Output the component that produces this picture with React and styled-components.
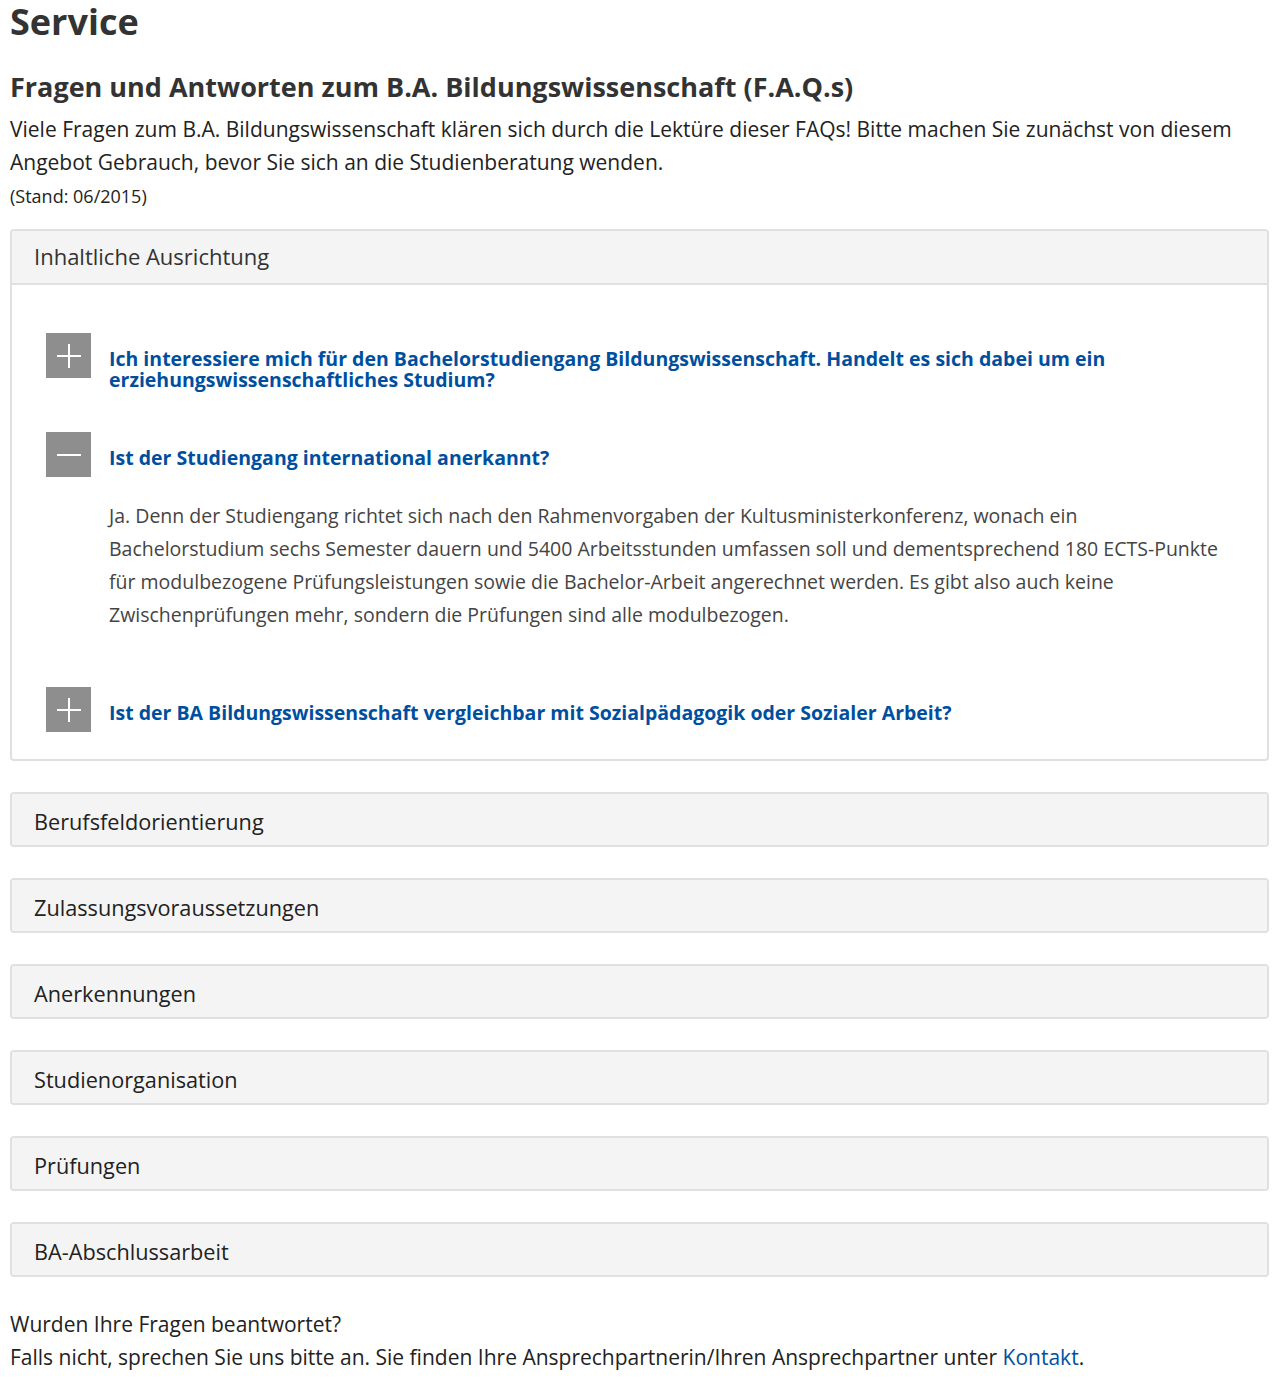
import React from "react";
import styled, { createGlobalStyle } from "styled-components";

const Global = createGlobalStyle`
  html, body { margin: 0; padding: 0; background: #fff; }
  body { font-family: "Open Sans", "Noto Sans", sans-serif; color: #222; }
`;

const Page = styled.div`
  padding: 0 11px 0 10px;
`;

const Title = styled.h1`
  margin: -2px 0 0;
  font-size: 36px;
  line-height: 48px;
  font-weight: 700;
  color: #333;
`;

const Subtitle = styled.h2`
  margin: 23px 0 0;
  font-size: 27px;
  line-height: 36px;
  font-weight: 700;
  color: #333;
`;

const Intro = styled.p`
  margin: 8px 0 0;
  font-size: 21px;
  line-height: 33px;
  color: #222;
`;

const Stand = styled.p`
  margin: 3px 0 0;
  font-size: 18px;
  line-height: 28px;
  color: #222;
`;

const Panels = styled.div`
  margin-top: 19px;
  display: flex;
  flex-direction: column;
  gap: 31px;
`;

const Panel = styled.section`
  border: 2px solid #e0e0e0;
  border-radius: 4px;
  background: #fff;
  overflow: hidden;
`;

const PanelHeader = styled.div`
  background: #f4f4f4;
  padding: ${(p) => (p.$open ? "0 22px 2px" : "3px 22px 0")};
  height: ${(p) => (p.$open ? "50px" : "48px")};
  display: flex;
  align-items: center;
  font-size: ${(p) => (p.$open ? "22px" : "21.7px")};
  color: ${(p) => (p.$open ? "#333" : "#222")};
  border-bottom: ${(p) => (p.$open ? "2px solid #e0e0e0" : "none")};
`;

const PanelBody = styled.div`
  padding: 48px 34px 27px;
`;

const Item = styled.div`
  margin-bottom: ${(p) => (p.$last ? "0" : "42px")};
`;

const QRow = styled.div`
  display: flex;
  align-items: flex-start;
  gap: 18px;
`;

const Toggle = styled.span`
  flex: 0 0 45px;
  width: 45px;
  height: 45px;
  background: #8e8e8e;
  position: relative;
  &::before, &::after {
    content: "";
    position: absolute;
    background: #fff;
    left: 50%;
    top: 50%;
    transform: translate(-50%, -50%);
  }
  &::before { width: 24px; height: 2px; }
  &::after {
    width: 2px;
    height: 24px;
    display: ${(p) => (p.$open ? "none" : "block")};
  }
`;

const Question = styled.a`
  margin-top: 15px;
  font-size: 19.5px;
  line-height: 21px;
  font-weight: 700;
  color: #004f9f;
  text-decoration: none;
  cursor: pointer;
`;

const Answer = styled.p`
  margin: 0;
  padding: 22px 14px 14px 63px;
  font-size: 19.5px;
  line-height: 33px;
  color: #444;
`;

const Footer = styled.div`
  margin-top: 31px;
  padding-bottom: 8px;
  font-size: 21px;
  line-height: 33px;
  color: #222;
`;

const Link = styled.a`
  color: #00509e;
  text-decoration: none;
`;

const questions = [
  {
    q: "Ich interessiere mich für den Bachelorstudiengang Bildungswissenschaft. Handelt es sich dabei um ein erziehungswissenschaftliches Studium?",
  },
  {
    q: "Ist der Studiengang international anerkannt?",
    a: "Ja. Denn der Studiengang richtet sich nach den Rahmenvorgaben der Kultusministerkonferenz, wonach ein Bachelorstudium sechs Semester dauern und 5400 Arbeitsstunden umfassen soll und dementsprechend 180 ECTS-Punkte für modulbezogene Prüfungsleistungen sowie die Bachelor-Arbeit angerechnet werden. Es gibt also auch keine Zwischenprüfungen mehr, sondern die Prüfungen sind alle modulbezogen.",
  },
  {
    q: "Ist der BA Bildungswissenschaft vergleichbar mit Sozialpädagogik oder Sozialer Arbeit?",
  },
];

const closed = [
  "Berufsfeldorientierung",
  "Zulassungsvoraussetzungen",
  "Anerkennungen",
  "Studienorganisation",
  "Prüfungen",
  "BA-Abschlussarbeit",
];

export default function App() {
  return (
    <>
      <Global />
      <Page>
        <Title>Service</Title>
        <Subtitle>Fragen und Antworten zum B.A. Bildungswissenschaft (F.A.Q.s)</Subtitle>
        <Intro>
          Viele Fragen zum B.A. Bildungswissenschaft klären sich durch die Lektüre dieser FAQs! Bitte machen Sie zunächst von diesem Angebot Gebrauch, bevor Sie sich an die Studienberatung wenden.
        </Intro>
        <Stand>(Stand: 06/2015)</Stand>
        <Panels>
          <Panel>
            <PanelHeader $open>Inhaltliche Ausrichtung</PanelHeader>
            <PanelBody>
              {questions.map((item, i) => (
                <Item key={i} $last={i === questions.length - 1}>
                  <QRow>
                    <Toggle $open={!!item.a} />
                    <Question>{item.q}</Question>
                  </QRow>
                  {item.a && <Answer>{item.a}</Answer>}
                </Item>
              ))}
            </PanelBody>
          </Panel>
          {closed.map((t) => (
            <Panel key={t}>
              <PanelHeader>{t}</PanelHeader>
            </Panel>
          ))}
        </Panels>
        <Footer>
          Wurden Ihre Fragen beantwortet?
          <br />
          Falls nicht, sprechen Sie uns bitte an. Sie finden Ihre Ansprechpartnerin/Ihren Ansprechpartner unter <Link href="#">Kontakt</Link>.
        </Footer>
      </Page>
    </>
  );
}
